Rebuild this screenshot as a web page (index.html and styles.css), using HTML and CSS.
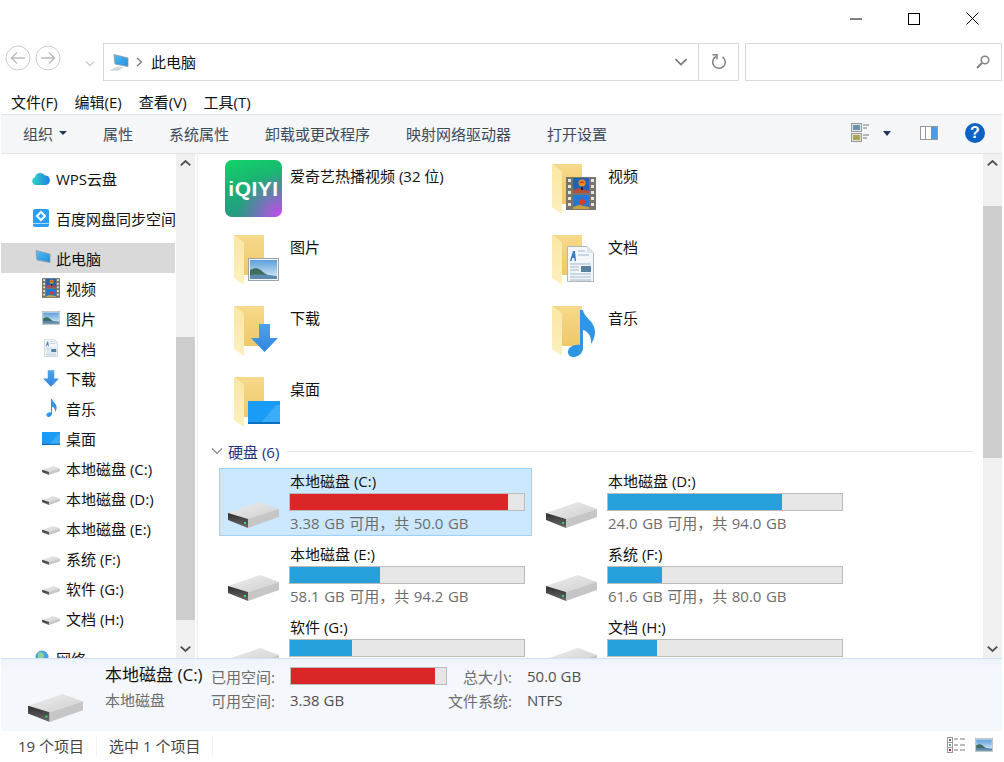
FILE: index.html
```html
<!DOCTYPE html>
<html lang="zh-CN">
<head>
  <meta charset="UTF-8" />
  <title>此电脑</title>
  <link rel="stylesheet" href="styles.css">
</head>
<body>

  <!-- shared icons -->
  <svg class="sprite" width="0" height="0">
    <defs>
      <linearGradient id="gBack" x1="0" y1="0" x2="0" y2="1"><stop offset="0" stop-color="#f6d98b"/><stop offset="1" stop-color="#efc868"/></linearGradient>
      <linearGradient id="gFlap" x1="0" y1="0" x2="0" y2="1"><stop offset="0" stop-color="#fbe6a2"/><stop offset="1" stop-color="#fdf0bd"/></linearGradient>
      <linearGradient id="gSky" x1="0" y1="0" x2="0" y2="1"><stop offset="0" stop-color="#5e9fd8"/><stop offset="1" stop-color="#dceef8"/></linearGradient>
      <linearGradient id="gBlue" x1="0" y1="0" x2="0" y2="1"><stop offset="0" stop-color="#4fa3ea"/><stop offset="1" stop-color="#2f86dc"/></linearGradient>
      <linearGradient id="gDriveTop" x1="0" y1="0" x2="1" y2="1"><stop offset="0" stop-color="#eeeeee"/><stop offset="1" stop-color="#cfcfcf"/></linearGradient>
      <linearGradient id="gDriveFace" x1="0" y1="0" x2="0" y2="1"><stop offset="0" stop-color="#2f2f2f"/><stop offset="1" stop-color="#6a6a6a"/></linearGradient>
      <linearGradient id="gScreen" x1="0" y1="0" x2="1" y2="1"><stop offset="0" stop-color="#55bdf5"/><stop offset="1" stop-color="#1f8fe0"/></linearGradient>
    </defs>
    <symbol id="folder" viewBox="0 0 30 50">
      <path d="M0 0H30V40H10V8Z" fill="url(#gBack)"/>
      <path d="M0 0L10 8V50L0 43Z" fill="url(#gFlap)"/>
    </symbol>
    <symbol id="drive" viewBox="0 0 51 26">
      <path d="M0 11L32 0L51 7L20 17Z" fill="url(#gDriveTop)"/>
      <path d="M0 11L20 17V26L0 18Z" fill="url(#gDriveFace)"/>
      <path d="M20 17L51 7V15L20 26Z" fill="#c6c6c6"/>
      <rect x="16" y="20" width="2" height="2" fill="#35d35a"/>
    </symbol>
    <symbol id="film" viewBox="0 0 30 33">
      <rect width="30" height="33" fill="#77756c"/>
      <path d="M2 2h3v3H2zM2 8h3v3H2zM2 14h3v3H2zM2 20h3v3H2zM2 26h3v3H2zM25 2h3v3h-3zM25 8h3v3h-3zM25 14h3v3h-3zM25 20h3v3h-3zM25 26h3v3h-3z" fill="#e4e4e0"/>
      <rect x="7" y="1" width="16" height="15" fill="#1f62b8"/>
      <rect x="7" y="18" width="16" height="14" fill="#2476d8"/>
      <path d="M7 13l6-2 10 3v2H7z" fill="#b4503a"/>
      <path d="M7 30l6-2 10 2v2H7z" fill="#c9a23a"/>
      <circle cx="16" cy="6" r="3.500" fill="#e8901f"/>
      <path d="M13 6h6L16 4z" fill="#d8301f"/>
      <circle cx="16" cy="25" r="3" fill="#d8401f"/>
      <rect x="15" y="10" width="2" height="3" fill="#222"/>
    </symbol>
    <symbol id="picture" viewBox="0 0 31 23">
      <rect x=".5" y=".5" width="30" height="22" fill="#f2f6f8" stroke="#9aa4aa"/>
      <rect x="2" y="2" width="27" height="19" fill="url(#gSky)"/>
      <path d="M2 12c6-3 9-2 13 2s9 4 14 4v3H2z" fill="#3f6d5c"/>
      <path d="M2 17c8-1 18 0 27 1v3H2z" fill="#5f8ab0"/>
    </symbol>
    <symbol id="doc" viewBox="0 0 27 36">
      <path d="M.5.5H20L26.500 7V35.500H.5Z" fill="#f3f7fa" stroke="#aab8c2"/>
      <path d="M20 .5V7H26.500" fill="#dde6ec"/>
      <path d="M3 15L6 5h2l1 10H7.500L7.300 12H5.300L4.500 15Z" fill="#3a7cc4"/>
      <path d="M11 5h7M11 9h11M3 18h21M3 28h21M3 31h21M3 34h21" stroke="#9db8cc"/>
      <rect x="14" y="20" width="10" height="6" fill="#56819f"/>
      <path d="M3 21h9M3 24h9" stroke="#9db8cc"/>
    </symbol>
    <symbol id="down" viewBox="0 0 27 28">
      <path d="M8 0H19V14H27L13.500 28L0 14H8Z" fill="url(#gBlue)"/>
    </symbol>
    <symbol id="note" viewBox="0 0 29 47">
      <path d="M13 0h3c1 8 12 11 12 22 0 5-2 9-4 12 1-7-3-13-8-14V38c0 5-5 9-9 9-4 0-6-2-6-5 0-5 6-8 12-7Z" fill="#2f95e6"/>
    </symbol>
    <symbol id="desk" viewBox="0 0 32 23">
      <rect width="32" height="23" fill="#1a9bf5"/>
      <path d="M12 23L28 4H32V23Z" fill="#3aabf7"/>
      <rect y="21" width="32" height="2" fill="#0d6fc0"/>
    </symbol>
    <symbol id="pc" viewBox="0 0 20 17">
      <path d="M0 16.500L8 12.500L15 13.500L8 17Z" fill="#d3d7da"/>
      <path d="M5 .5L19 4V12.500L6 10Z" fill="url(#gScreen)" stroke="#8a979f" stroke-width=".8"/>
    </symbol>
  </svg>

  <div class="titlebar">
    <div class="win-btn">
      <svg width="12" height="12" viewBox="0 0 12 12"><path d="M0 6H12" stroke="#000"/></svg>
    </div>
    <div class="win-btn">
      <svg width="12" height="12" viewBox="0 0 12 12"><rect x=".5" y=".5" width="11" height="11" fill="none" stroke="#000"/></svg>
    </div>
    <div class="win-btn">
      <svg width="13" height="13" viewBox="0 0 13 13"><path d="M.5.5L12.500 12.500M12.500.5L.5 12.500" stroke="#000"/></svg>
    </div>
  </div>

  <div class="addressbar">
    <div class="nav-btns">
      <svg width="26" height="26" viewBox="0 0 26 26"><circle cx="13" cy="13" r="12" fill="none" stroke="#ccc"/><path d="M20 13H7M12 7.500L6.500 13L12 18.500" fill="none" stroke="#bbb" stroke-width="1.500"/></svg>
      <svg width="26" height="26" viewBox="0 0 26 26"><circle cx="13" cy="13" r="12" fill="none" stroke="#ccc"/><path d="M6 13H19M14 7.500L19.500 13L14 18.500" fill="none" stroke="#bbb" stroke-width="1.500"/></svg>
      <svg class="recent" width="10" height="6" viewBox="0 0 10 6"><path d="M1 .5L5 4.500L9 .5" fill="none" stroke="#ccc" stroke-width="1.300"/></svg>
    </div>
    <div class="address">
      <svg class="i-pc"><use href="#pc"/></svg>
      <svg class="crumb-sep" width="7" height="10" viewBox="0 0 7 10"><path d="M1 1L5.500 5L1 9" fill="none" stroke="#777" stroke-width="1.300"/></svg>
      <span class="crumb">此电脑</span>
      <svg class="addr-drop" width="12" height="8" viewBox="0 0 12 8"><path d="M.5 1L6 6.500L11.500 1" fill="none" stroke="#777" stroke-width="1.600"/></svg>
      <div class="refresh">
        <svg width="16" height="16" viewBox="0 0 16 16"><path d="M5 2.500A6.300 6.300 0 1 0 11.500 2.800" fill="none" stroke="#808080" stroke-width="1.500"/><path d="M1.500 .5H6V5" fill="none" stroke="#808080" stroke-width="1.500" transform="translate(0 .3)"/></svg>
      </div>
    </div>
    <div class="search">
      <svg width="14" height="14" viewBox="0 0 14 14"><circle cx="9" cy="5" r="3.800" fill="none" stroke="#808080" stroke-width="1.500"/><path d="M6 8L1 13" stroke="#808080" stroke-width="2"/></svg>
    </div>
  </div>

  <div class="menubar">
    <span>文件(F)</span>
    <span>编辑(E)</span>
    <span>查看(V)</span>
    <span>工具(T)</span>
  </div>

  <div class="toolbar">
    <span class="cmd">组织<i class="caret"></i></span>
    <span class="cmd">属性</span>
    <span class="cmd">系统属性</span>
    <span class="cmd">卸载或更改程序</span>
    <span class="cmd">映射网络驱动器</span>
    <span class="cmd">打开设置</span>
    <div class="toolbar-right">
      <svg class="view-toggle" width="20" height="20" viewBox="0 0 20 20">
        <rect x=".5" y=".5" width="10" height="8" fill="#dfe7ec" stroke="#999"/><rect x="2" y="2" width="7" height="5" fill="#6f93ad"/>
        <rect x=".5" y="10.500" width="10" height="8" fill="#e8e4cc" stroke="#999"/><rect x="2" y="12" width="7" height="5" fill="#a7a85a"/>
        <path d="M12 2h6M12 5h4M12 12h6M12 15h4" stroke="#777"/>
      </svg>
      <i class="caret caret-view"></i>
      <svg class="pane-toggle" width="18" height="14" viewBox="0 0 18 14">
        <rect x=".5" y=".5" width="17" height="13" fill="#fff" stroke="#999"/>
        <rect x="11" y="1" width="6" height="12" fill="#4a9be8"/>
        <path d="M5.500 1V13" stroke="#999"/>
      </svg>
      <span class="help">?</span>
    </div>
  </div>

  <div class="main">
    <div class="sidebar">
      <div class="nav-list">
        <div class="nav-item gap-after">
          <span class="nav-icon"><svg class="i-cloud" viewBox="0 0 18 13"><defs><linearGradient id="gCloud" x1="0" y1="0" x2="1" y2="0"><stop offset="0" stop-color="#2fd4c0"/><stop offset="1" stop-color="#1f7fe8"/></linearGradient></defs><path d="M4 13a4 4 0 0 1-1-7.800A5.500 5.500 0 0 1 13 3.500a4.800 4.800 0 0 1 1 9.500Z" fill="url(#gCloud)"/></svg></span>
          WPS云盘
        </div>
        <div class="nav-item gap-after">
          <span class="nav-icon"><svg class="i-baidu" viewBox="0 0 16 18"><rect width="16" height="18" rx="2" fill="#2a9df4"/><path d="M8 3L12 7L8 11L4 7Z" fill="none" stroke="#fff" stroke-width="2"/><rect y="14" width="16" height="1" fill="#a9d8fb"/></svg></span>
          百度网盘同步空间
        </div>
        <div class="nav-item selected">
          <span class="nav-icon"><svg class="i-pc"><use href="#pc"/></svg></span>
          此电脑
        </div>
        <div class="nav-item sub"><span class="nav-icon"><svg class="i-film"><use href="#film"/></svg></span>视频</div>
        <div class="nav-item sub"><span class="nav-icon"><svg class="i-pic"><use href="#picture"/></svg></span>图片</div>
        <div class="nav-item sub"><span class="nav-icon"><svg class="i-doc"><use href="#doc"/></svg></span>文档</div>
        <div class="nav-item sub"><span class="nav-icon"><svg class="i-down"><use href="#down"/></svg></span>下载</div>
        <div class="nav-item sub"><span class="nav-icon"><svg class="i-note"><use href="#note"/></svg></span>音乐</div>
        <div class="nav-item sub"><span class="nav-icon"><svg class="i-desk"><use href="#desk"/></svg></span>桌面</div>
        <div class="nav-item sub"><span class="nav-icon"><svg class="i-drive-s"><use href="#drive"/></svg></span>本地磁盘 (C:)</div>
        <div class="nav-item sub"><span class="nav-icon"><svg class="i-drive-s"><use href="#drive"/></svg></span>本地磁盘 (D:)</div>
        <div class="nav-item sub"><span class="nav-icon"><svg class="i-drive-s"><use href="#drive"/></svg></span>本地磁盘 (E:)</div>
        <div class="nav-item sub"><span class="nav-icon"><svg class="i-drive-s"><use href="#drive"/></svg></span>系统 (F:)</div>
        <div class="nav-item sub"><span class="nav-icon"><svg class="i-drive-s"><use href="#drive"/></svg></span>软件 (G:)</div>
        <div class="nav-item sub gap-after"><span class="nav-icon"><svg class="i-drive-s"><use href="#drive"/></svg></span>文档 (H:)</div>
        <div class="nav-item">
          <span class="nav-icon"><svg class="i-net" viewBox="0 0 18 16"><circle cx="10" cy="7" r="6.500" fill="#4aa0e0"/><path d="M6 3c3-2 6 0 6 3s-4 3-6 2z" fill="#8fcf9a"/><rect y="10" width="8" height="6" fill="#9db4c4"/></svg></span>
          网络
        </div>
      </div>
      <div class="scrollbar">
        <svg class="sb-arrow" viewBox="0 0 20 20"><path d="M5 12L10 7.500L15 12" fill="none" stroke="#505050" stroke-width="2"/></svg>
        <div class="sb-track"><div class="sb-thumb thumb-nav"></div></div>
        <svg class="sb-arrow" viewBox="0 0 20 20"><path d="M5 8L10 12.500L15 8" fill="none" stroke="#505050" stroke-width="2"/></svg>
      </div>
    </div>

    <div class="content">
      <div class="files">
        <div class="tile-grid">
          <div class="tile">
            <span class="tile-icon"><span class="iqiyi">iQIYI</span></span>
            <span class="tile-name">爱奇艺热播视频 (32 位)</span>
          </div>
          <div class="tile">
            <span class="tile-icon"><svg class="i-folder"><use href="#folder"/></svg><svg class="ov ov-film"><use href="#film"/></svg></span>
            <span class="tile-name">视频</span>
          </div>
          <div class="tile">
            <span class="tile-icon"><svg class="i-folder"><use href="#folder"/></svg><svg class="ov ov-pic"><use href="#picture"/></svg></span>
            <span class="tile-name">图片</span>
          </div>
          <div class="tile">
            <span class="tile-icon"><svg class="i-folder"><use href="#folder"/></svg><svg class="ov ov-doc"><use href="#doc"/></svg></span>
            <span class="tile-name">文档</span>
          </div>
          <div class="tile">
            <span class="tile-icon"><svg class="i-folder"><use href="#folder"/></svg><svg class="ov ov-down"><use href="#down"/></svg></span>
            <span class="tile-name">下载</span>
          </div>
          <div class="tile">
            <span class="tile-icon"><svg class="i-folder"><use href="#folder"/></svg><svg class="ov ov-note"><use href="#note"/></svg></span>
            <span class="tile-name">音乐</span>
          </div>
          <div class="tile">
            <span class="tile-icon"><svg class="i-folder"><use href="#folder"/></svg><svg class="ov ov-desk"><use href="#desk"/></svg></span>
            <span class="tile-name">桌面</span>
          </div>
        </div>

        <div class="group-head">
          <svg width="12" height="7" viewBox="0 0 12 7"><path d="M1 .5L6 5.500L11 .5" fill="none" stroke="#888" stroke-width="1.200"/></svg>
          <span>硬盘 (6)</span>
          <i class="group-line"></i>
        </div>

        <div class="tile-grid">
          <div class="drive selected">
            <svg class="i-drive"><use href="#drive"/></svg>
            <div class="drive-info">
              <div class="drive-name">本地磁盘 (C:)</div>
              <div class="bar"><div class="bar-fill full" style="width:93.2%"></div></div>
              <div class="drive-free">3.38 GB 可用，共 50.0 GB</div>
            </div>
          </div>
          <div class="drive">
            <svg class="i-drive"><use href="#drive"/></svg>
            <div class="drive-info">
              <div class="drive-name">本地磁盘 (D:)</div>
              <div class="bar"><div class="bar-fill" style="width:74.5%"></div></div>
              <div class="drive-free">24.0 GB 可用，共 94.0 GB</div>
            </div>
          </div>
          <div class="drive">
            <svg class="i-drive"><use href="#drive"/></svg>
            <div class="drive-info">
              <div class="drive-name">本地磁盘 (E:)</div>
              <div class="bar"><div class="bar-fill" style="width:38.3%"></div></div>
              <div class="drive-free">58.1 GB 可用，共 94.2 GB</div>
            </div>
          </div>
          <div class="drive">
            <svg class="i-drive"><use href="#drive"/></svg>
            <div class="drive-info">
              <div class="drive-name">系统 (F:)</div>
              <div class="bar"><div class="bar-fill" style="width:23%"></div></div>
              <div class="drive-free">61.6 GB 可用，共 80.0 GB</div>
            </div>
          </div>
          <div class="drive">
            <svg class="i-drive"><use href="#drive"/></svg>
            <div class="drive-info">
              <div class="drive-name">软件 (G:)</div>
              <div class="bar"><div class="bar-fill" style="width:26.5%"></div></div>
            </div>
          </div>
          <div class="drive">
            <svg class="i-drive"><use href="#drive"/></svg>
            <div class="drive-info">
              <div class="drive-name">文档 (H:)</div>
              <div class="bar"><div class="bar-fill" style="width:21%"></div></div>
            </div>
          </div>
        </div>
      </div>
      <div class="scrollbar">
        <svg class="sb-arrow" viewBox="0 0 20 20"><path d="M5 12L10 7.500L15 12" fill="none" stroke="#505050" stroke-width="2"/></svg>
        <div class="sb-track"><div class="sb-thumb thumb-files"></div></div>
        <svg class="sb-arrow" viewBox="0 0 20 20"><path d="M5 8L10 12.500L15 8" fill="none" stroke="#505050" stroke-width="2"/></svg>
      </div>
    </div>
  </div>

  <div class="details">
    <svg class="i-drive-l"><use href="#drive"/></svg>
    <div class="details-title">
      <div class="details-name">本地磁盘 (C:)</div>
      <div class="details-type">本地磁盘</div>
    </div>
    <div class="details-grid">
      <span class="label">已用空间:</span>
      <div class="bar bar-small"><div class="bar-fill full" style="width:93.2%"></div></div>
      <span class="label">总大小:</span>
      <span class="value">50.0 GB</span>
      <span class="label">可用空间:</span>
      <span class="value">3.38 GB</span>
      <span class="label">文件系统:</span>
      <span class="value">NTFS</span>
    </div>
  </div>

  <div class="statusbar">
    <span class="status-cell">19 个项目</span>
    <span class="status-cell">选中 1 个项目</span>
    <div class="status-views">
      <svg width="18" height="16" viewBox="0 0 18 16">
        <rect x=".5" y=".5" width="5" height="5" fill="#fff" stroke="#999"/><rect x=".5" y="5.500" width="5" height="5" fill="#fff" stroke="#999"/><rect x=".5" y="10.500" width="5" height="5" fill="#fff" stroke="#999"/>
        <rect x="2" y="2" width="2" height="2" fill="#667"/><rect x="2" y="7" width="2" height="2" fill="#797"/><rect x="2" y="12" width="2" height="2" fill="#a24"/>
        <path d="M7 2h4M13 2h5M7 8h4M13 8h5M7 13h4M13 13h5" stroke="#777"/>
      </svg>
      <svg class="i-large"><use href="#picture"/></svg>
    </div>
  </div>

</body>
</html>
```

FILE: styles.css
```css
:root {
  --text: #111;
  --muted: #6d6d6d;
  --line: #d9d9d9;
}
body {
  margin: 0;
  width: 1004px; height: 762px;
  overflow: hidden;
  background: #fff; color: var(--text);
  font-family: "Open Sans", "Noto Sans CJK SC", sans-serif;
  font-size: 15px;
  display: flex; flex-direction: column;
}
svg { display: block; flex: none; }
.sprite { position: absolute; }

/* title bar */
.titlebar {
  height: 43px; flex: none;
  display: flex; justify-content: flex-end;
  padding-right: 2px;
}
.win-btn {
  width: 58.500px; height: 37px;
  display: flex; align-items: center; justify-content: center;
}

/* address bar */
.addressbar {
  height: 39px; flex: none;
  display: flex;
  padding-right: 2px;
}
.nav-btns {
  width: 103px; flex: none;
  display: flex; align-items: center; gap: 4px;
  padding: 0 0 9px 5px;
  box-sizing: border-box;
}
.recent { margin: 12px 0 0 20px; }
.address, .search {
  border: 1px solid var(--line);
  box-sizing: border-box;
  display: flex; align-items: center;
  height: 38px;
}
.address { width: 636px; padding-left: 5px; }
.i-pc { width: 20px; height: 17px; }
.crumb-sep { margin-left: 7px; }
.crumb { margin: -2px 0 0 8px; }
.addr-drop { margin-left: auto; margin-right: 11px; }
.refresh {
  width: 39px; height: 100%;
  border-left: 1px solid var(--line);
  display: flex; align-items: center; justify-content: center;
}
.search {
  width: 257px; margin-left: 6px;
  justify-content: flex-end; padding-right: 11px;
}

/* menu */
.menubar {
  height: 32px; flex: none;
  display: flex; align-items: center; gap: 17px;
  padding: 7px 0 0 11px;
  box-sizing: border-box;
}

/* command bar */
.toolbar {
  height: 40px; flex: none;
  margin: 0 2px 0 1px;
  padding: 0 0 2px 22px;
  box-sizing: border-box;
  display: flex; align-items: center; gap: 36px;
  background: #f5f6f7;
  border-top: 1px solid #e3e3e3;
  border-bottom: 1px solid #e3e3e3;
  color: #3c4a5a;
}
.cmd { display: flex; align-items: center; }
.caret {
  width: 0; height: 0;
  margin-left: 6px;
  border: 4px solid transparent;
  border-top: 4px solid #1e395b;
  border-bottom: 0;
}
.toolbar-right {
  margin-left: auto;
  display: flex; align-items: center;
  padding-right: 17px;
}
.view-toggle { margin-right: 1px; }
.caret-view { margin-left: 11px; border-width: 5px 4.500px 0; }
.pane-toggle { margin-left: 29px; }
.help {
  width: 20px; height: 20px;
  margin-left: 27px;
  border-radius: 50%;
  background: #0a62c2; color: #fff;
  font: bold 16px/20px "Liberation Sans", sans-serif;
  text-align: center;
}

/* main area */
.main {
  height: 504px; flex: none;
  display: flex;
  overflow: hidden;
  margin-right: 2px;
}
.sidebar {
  width: 198px; flex: none;
  display: flex;
  box-sizing: border-box;
  border-right: 1px solid #ececec;
}
.nav-list {
  width: 174px; flex: none;
  margin: 0 1px;
  padding-top: 9px;
}
.nav-item {
  height: 30px;
  display: flex; align-items: center; gap: 5px;
  padding-left: 30px;
  white-space: nowrap;
}
.nav-item.sub { padding-left: 40px; }
.nav-item.gap-after { margin-bottom: 10px; }
.nav-item.selected { background: #d9d9d9; }
.nav-icon {
  width: 20px; height: 20px; flex: none;
  display: flex; align-items: center; justify-content: center;
}
.i-cloud { width: 18px; height: 13px; }
.i-baidu { width: 16px; height: 18px; }
.i-film { width: 18px; height: 20px; }
.i-pic { width: 18px; height: 14px; }
.i-doc { width: 14px; height: 18px; }
.i-down { width: 16px; height: 17px; }
.i-note { width: 11px; height: 18px; }
.i-desk { width: 18px; height: 13px; }
.i-drive-s { width: 18px; height: 9px; margin-top: 4px; }
.i-net { width: 18px; height: 16px; }

.scrollbar {
  width: 19px; flex: none;
  background: #f0f0f0;
  display: flex; flex-direction: column;
}
.sb-arrow { width: 19px; height: 19px; }
.sb-track { flex: 1; overflow: hidden; }
.sb-thumb { background: #cdcdcd; }
.thumb-nav { margin-top: 164px; height: 283px; }
.thumb-files { margin-top: 33px; height: 252px; }

.content {
  flex: 1;
  display: flex;
  min-width: 0;
}
.files {
  flex: 1;
  padding: 1px 0 0 21px;
  min-width: 0;
  overflow: hidden;
}
.tile-grid {
  display: grid;
  grid-template-columns: 313px 313px;
  gap: 5px;
}
.tile {
  height: 66px;
  display: flex;
}
.tile-icon {
  width: 71px; flex: none;
  position: relative;
}
.tile-name { padding-top: 10px; line-height: 22px; }
.i-folder {
  width: 30px; height: 50px;
  margin: 9px 0 0 15px;
}
.ov { position: absolute; }
.ov-film { left: 29px; top: 22px; width: 30px; height: 33px; }
.ov-pic { left: 29px; top: 32px; width: 31px; height: 23px; }
.ov-doc { left: 30px; top: 20px; width: 27px; height: 36px; }
.ov-down { left: 32px; top: 27px; width: 27px; height: 28px; }
.ov-note { left: 30px; top: 13px; width: 29px; height: 47px; }
.ov-desk { left: 29px; top: 33px; width: 32px; height: 23px; }
.iqiyi {
  position: absolute;
  left: 6px; top: 5px;
  width: 57px; height: 57px;
  border-radius: 7px;
  background:
    radial-gradient(circle at 100% 100%, #c94af0 0, rgba(201,74,240,0) 55%),
    linear-gradient(165deg, #12d468 0%, #1cae74 45%, #2b8f8c 100%);
  color: #fff;
  font: bold 21px/57px "Liberation Sans", sans-serif;
  text-align: center;
  letter-spacing: .5px;
}

.group-head {
  height: 26px;
  margin: 4px 10px 4px -8px;
  display: flex; align-items: center;
  color: #1e3287;
}
.group-head span { margin-left: 5px; }
.group-line {
  flex: 1; height: 1px;
  margin-left: 8px;
  background: #e2e2e2;
}

.drive {
  height: 68px;
  box-sizing: border-box;
  border: 1px solid transparent;
  display: flex;
}
.drive.selected { background: #cce8ff; border-color: #99d1ff; }
.i-drive {
  width: 51px; height: 26px;
  margin: 33px 0 0 8px;
}
.drive-info { margin-left: 10px; width: 236px; }
.drive-name { height: 24px; line-height: 24px; padding-left: 1px; }
.bar {
  height: 18px;
  box-sizing: border-box;
  background: #e6e6e6;
  border: 1px solid #bcbcbc;
}
.bar-fill { height: 100%; background: #26a0da; }
.bar-fill.full { background: #da2626; }
.drive-free {
  color: var(--muted);
  line-height: 24px;
  padding-left: 1px;
  word-spacing: .6px;
}

/* details pane */
.details {
  height: 73px; flex: none;
  margin: 0 2px 0 1px;
  box-sizing: border-box;
  background: linear-gradient(#eef4fc, #f4f7fc 12px, #f4f7fc);
  border-top: 1px solid #d3e2f4;
  display: flex;
}
.i-drive-l {
  width: 55px; height: 28px;
  margin: 35px 0 0 27px;
}
.details-title { margin-left: 22px; width: 107px; flex: none; padding-top: 3px; white-space: nowrap; }
.details-name { font-size: 17px; line-height: 26px; }
.details-type { color: var(--muted); line-height: 25px; }
.details-grid {
  display: grid;
  grid-template-columns: 63px 143px 64px auto;
  column-gap: 15px;
  grid-auto-rows: 24px;
  align-items: center;
  justify-items: start;
  padding-top: 5px;
  color: var(--muted);
  white-space: nowrap;
}
.label { justify-self: end; }
.bar-small { width: 157px; }
.value { color: #505050; }

/* status bar */
.statusbar {
  flex: 1;
  display: flex; align-items: center;
  padding: 0 11px 3px 18px;
  color: #444;
}
.status-cell {
  padding-right: 12px;
  margin-right: 12px;
  border-right: 1px solid #f3f3f3;
}
.status-views {
  margin-left: auto;
  display: flex; align-items: center; gap: 10px;
}
.i-large { width: 18px; height: 14px; }
```
